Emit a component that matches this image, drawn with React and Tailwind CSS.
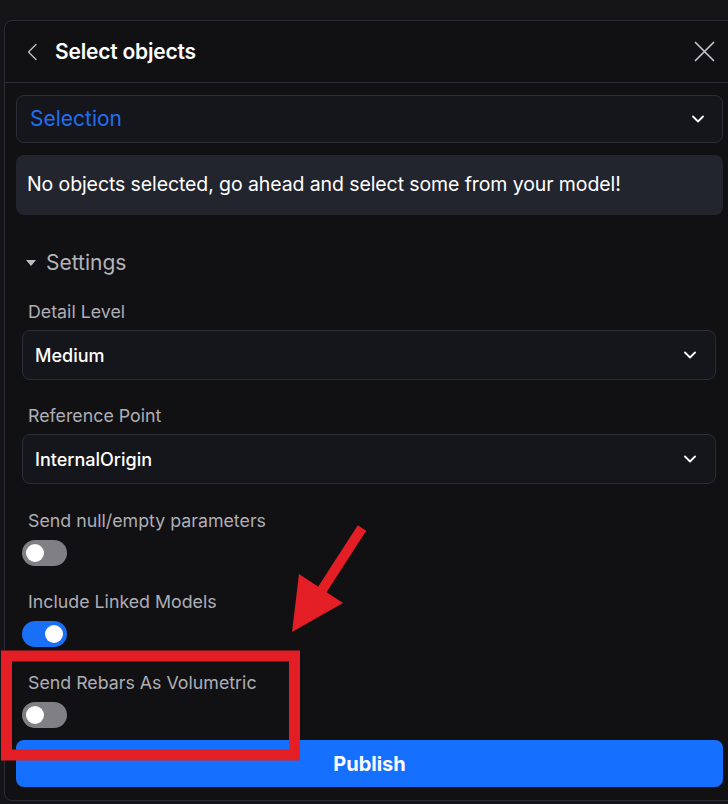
import React from 'react';

const font = { fontFamily: 'Inter, "Noto Sans", sans-serif' };

const ChevronDown = () => (
  <svg width="12" height="8" viewBox="0 0 12 8" fill="none" stroke="#ffffff" strokeWidth="1.8" strokeLinecap="round" strokeLinejoin="round">
    <path d="M1 1.5l5 5 5-5" />
  </svg>
);

const Toggle = ({ on }) => (
  <div className={`w-[45px] h-[26px] rounded-full flex items-center px-[4px] ${on ? 'bg-[#1a6ff7] justify-end' : 'bg-[#808084] justify-start'}`}>
    <div className="w-[18px] h-[18px] rounded-full bg-white" />
  </div>
);

const SelectBox = ({ value }) => (
  <div className="h-[50px] w-[694px] rounded-lg border border-[#2c2d37] bg-[#15161b] flex items-center justify-between pl-[12px] pr-[19px]">
    <span className="text-[18px] font-medium text-white">{value}</span>
    <ChevronDown />
  </div>
);

const Label = ({ children }) => (
  <div className="h-[22px] pl-[6px] text-[17.8px] text-[#aeaeb4] leading-[22px]">{children}</div>
);

export default function App() {
  return (
    <div className="relative w-[728px] h-[804px] overflow-hidden bg-[#151517] pt-[20px] pl-[4px]" style={font}>
      {/* Panel */}
      <div className="w-[740px] h-[781px] rounded-tl-lg rounded-bl-lg border border-[#2b2c36] bg-[#111114] flex flex-col">
        {/* Header */}
        <div className="h-[62px] border-b border-[#2b2c36] flex items-center pr-[28px]">
          <svg className="ml-[19px]" width="16" height="18" viewBox="0 0 16 18" fill="none" stroke="#bdbdc2" strokeWidth="1.4" strokeLinecap="round" strokeLinejoin="round">
            <path d="M12 1.5L4.5 9l7.5 7.5" />
          </svg>
          <span className="ml-[15px] text-[21px] font-semibold text-white tracking-[-0.2px]">Select objects</span>
          <svg className="ml-auto" width="21" height="21" viewBox="0 0 21 21" fill="none" stroke="#c4c4c8" strokeWidth="1.7" strokeLinecap="round">
            <path d="M1.5 1.5l18 18M19.5 1.5l-18 18" />
          </svg>
        </div>

        <div className="pl-[11px] pt-[12px] flex flex-col">
          {/* Selection dropdown */}
          <div className="h-[48px] w-[707px] rounded-lg border border-[#2c2d37] bg-[#15161b] flex items-center justify-between pl-[13px] pr-[18px]">
            <span className="text-[21px] text-[#1f70f0]">Selection</span>
            <ChevronDown />
          </div>

          {/* Info box */}
          <div className="mt-[12px] h-[60px] w-[707px] rounded-lg bg-[#23252e] flex items-center pl-[11px]">
            <span className="text-[19.5px] text-white tracking-[-0.1px]">No objects selected, go ahead and select some from your model!</span>
          </div>

          {/* Settings */}
          <div className="mt-[36px] flex items-center pl-[10px] h-[24px]">
            <svg width="10" height="6" viewBox="0 0 10 6" fill="#bdbdc2">
              <path d="M0 0h10L5 6z" />
            </svg>
            <span className="ml-[10px] text-[21px] text-[#b4b4ba]">Settings</span>
          </div>

          <div className="pl-[6px] flex flex-col">
            <div className="mt-[26px]"><Label>Detail Level</Label></div>
            <div className="mt-[7px]"><SelectBox value="Medium" /></div>

            <div className="mt-[25px]"><Label>Reference Point</Label></div>
            <div className="mt-[7px]"><SelectBox value="InternalOrigin" /></div>

            <div className="mt-[26px]"><Label>Send null/empty parameters</Label></div>
            <div className="mt-[8px]"><Toggle on={false} /></div>

            <div className="mt-[25px]"><Label>Include Linked Models</Label></div>
            <div className="mt-[8px]"><Toggle on={true} /></div>

            <div className="mt-[25px]"><Label>Send Rebars As Volumetric</Label></div>
            <div className="mt-[8px]"><Toggle on={false} /></div>
          </div>

          {/* Publish */}
          <button className="mt-[12px] h-[47px] w-[707px] rounded-lg bg-[#1570ff] text-white text-[20px] font-bold flex items-center justify-center">
            Publish
          </button>
        </div>
      </div>

      {/* Red annotation overlay */}
      <svg className="absolute inset-0 pointer-events-none" width="728" height="804" viewBox="0 0 728 804">
        <rect x="6.5" y="656" width="288" height="99" fill="none" stroke="#e31e24" strokeWidth="11" />
        <path d="M362 528L322 590" stroke="#e31e24" strokeWidth="10" />
        <path d="M292 632L299 574L343 603Z" fill="#e31e24" />
      </svg>
    </div>
  );
}
